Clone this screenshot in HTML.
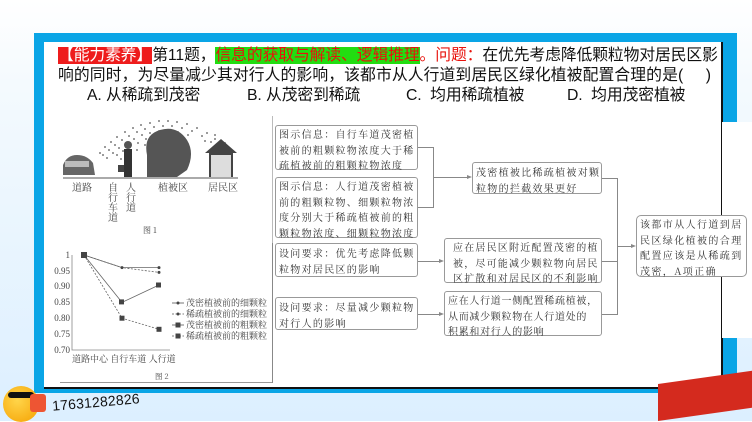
<!DOCTYPE html>
<html><head><meta charset="utf-8"><style>
*{margin:0;padding:0;box-sizing:border-box}
body{width:752px;height:421px;overflow:hidden;position:relative;background:linear-gradient(180deg,#fff 0%,#f4fafe 20%,#dcefff 100%);font-family:"Liberation Sans","Noto Sans CJK SC",sans-serif}
.abs{position:absolute}
.frame{left:34px;top:33px;width:703px;height:360px;background:#0aa5e6}
.inner{left:44px;top:42px;width:679px;height:347px;background:#fff;border-bottom:2px solid #111;border-right:2px solid #111}
.q{left:58px;font-size:15.8px;line-height:20px;color:#111;letter-spacing:-0.1px;white-space:nowrap}
.red{background:#ee1c1c;color:#fff}
.grn{background:#22dd11;color:#e8120c}
.rt{color:#e8120c}
.box{position:absolute;border:1px solid #999;border-radius:3px;background:#fff;font-family:"Noto Serif CJK SC","Liberation Serif",serif;font-size:10px;line-height:15.5px;letter-spacing:1.3px;color:#333;padding:0 3px;white-space:nowrap}
.ln{position:absolute;background:#888}
.ar{position:absolute;width:0;height:0;border-left:5px solid #888;border-top:2.5px solid transparent;border-bottom:2.5px solid transparent}
</style></head><body>
<div class="abs frame"></div>
<div class="abs inner"></div>
<div class="abs q" style="top:46px"><span class="red">【能力素养】</span>第11题，<span class="grn">信息的获取与解读、逻辑推理</span><span class="rt">。问题：</span>在优先考虑降低颗粒物对居民区影</div>
<div class="abs q" style="top:66px;letter-spacing:0.1px">响的同时，为尽量减少其对行人的影响，该都市从人行道到居民区绿化植被配置合理的是(&nbsp;&nbsp;&nbsp;&nbsp;&nbsp;)</div>
<div class="abs q" style="top:86px;left:87px">A. 从稀疏到茂密</div>
<div class="abs q" style="top:86px;left:247px">B. 从茂密到稀疏</div>
<div class="abs q" style="top:86px;left:406px">C.&nbsp; 均用稀疏植被</div>
<div class="abs q" style="top:86px;left:567px">D.&nbsp; 均用茂密植被</div>

<div class="abs" style="left:60px;top:116px;width:213px;height:267px;border-right:1px solid #bbb;border-bottom:1px solid #999"></div>
<svg class="abs" style="left:55px;top:115px" width="220" height="125" viewBox="0 0 220 125">
<g fill="#555">
<circle cx="45" cy="38" r="0.9"/><circle cx="50" cy="32" r="0.9"/><circle cx="56" cy="27" r="0.9"/><circle cx="62" cy="22" r="0.9"/><circle cx="70" cy="17" r="0.9"/><circle cx="78" cy="13" r="0.9"/><circle cx="86" cy="10" r="0.9"/><circle cx="95" cy="8" r="0.9"/><circle cx="104" cy="6" r="0.9"/><circle cx="113" cy="6" r="0.9"/><circle cx="122" cy="7" r="0.9"/><circle cx="132" cy="9" r="0.9"/><circle cx="142" cy="13" r="0.9"/><circle cx="152" cy="18" r="0.9"/><circle cx="160" cy="24" r="0.9"/>
<circle cx="48" cy="40" r="0.9"/><circle cx="54" cy="35" r="0.9"/><circle cx="60" cy="30" r="0.9"/><circle cx="67" cy="25" r="0.9"/><circle cx="74" cy="21" r="0.9"/><circle cx="82" cy="17" r="0.9"/><circle cx="90" cy="14" r="0.9"/><circle cx="99" cy="12" r="0.9"/><circle cx="108" cy="11" r="0.9"/><circle cx="117" cy="11" r="0.9"/><circle cx="127" cy="13" r="0.9"/><circle cx="137" cy="16" r="0.9"/><circle cx="147" cy="21" r="0.9"/><circle cx="156" cy="27" r="0.9"/><circle cx="165" cy="30" r="0.9"/>
<circle cx="52" cy="43" r="0.9"/><circle cx="58" cy="38" r="0.9"/><circle cx="64" cy="33" r="0.9"/><circle cx="71" cy="29" r="0.9"/><circle cx="79" cy="24" r="0.9"/><circle cx="87" cy="20" r="0.9"/><circle cx="95" cy="18" r="0.9"/><circle cx="104" cy="16" r="0.9"/><circle cx="113" cy="15" r="0.9"/><circle cx="123" cy="17" r="0.9"/><circle cx="133" cy="20" r="0.9"/><circle cx="150" cy="26" r="0.9"/><circle cx="170" cy="28" r="0.9"/>
<circle cx="62" cy="40" r="0.9"/><circle cx="68" cy="36" r="0.9"/><circle cx="75" cy="32" r="0.9"/><circle cx="83" cy="28" r="0.9"/><circle cx="91" cy="24" r="0.9"/><circle cx="100" cy="22" r="0.9"/><circle cx="109" cy="20" r="0.9"/><circle cx="118" cy="20" r="0.9"/><circle cx="128" cy="23" r="0.9"/><circle cx="160" cy="20" r="0.9"/><circle cx="66" cy="44" r="0.9"/><circle cx="74" cy="40" r="0.9"/><circle cx="82" cy="35" r="0.9"/><circle cx="90" cy="30" r="0.9"/><circle cx="96" cy="30" r="0.9"/>
</g>
<path d="M8 50 Q12 40 22 40 Q32 40 38 48 L40 60 L8 60 Z" fill="#666"/>
<rect x="10" y="46" width="24" height="6" fill="#bbb"/>
<rect x="69" y="34" width="8" height="28" fill="#333"/><circle cx="73" cy="30" r="4" fill="#555"/><rect x="63" y="50" width="6" height="7" fill="#444"/>
<path d="M92 62 L92 40 Q88 20 105 15 Q122 10 132 25 Q140 38 132 55 L122 62 Z" fill="#555"/>
<path d="M150 38 L166 24 L182 38 L178 38 L178 62 L154 62 L154 38 Z" fill="#444"/><rect x="156" y="40" width="20" height="22" fill="#ddd"/>
<line x1="8" y1="63" x2="183" y2="63" stroke="#555" stroke-width="1"/>
<g font-size="10" fill="#444" font-family="Noto Serif CJK SC,serif">
<text x="17" y="76">道路</text><text x="103" y="76">植被区</text><text x="153" y="76">居民区</text>
<text x="53" y="76">自</text><text x="53" y="86">行</text><text x="53" y="96">车</text><text x="53" y="106">道</text>
<text x="71" y="76">人</text><text x="71" y="86">行</text><text x="71" y="96">道</text>
<text x="88" y="118" font-size="8">图 1</text></g>
</svg>

<svg class="abs" style="left:50px;top:245px" width="225" height="140" viewBox="0 0 225 140">
<g font-family="Liberation Serif,serif" font-size="9" fill="#444" text-anchor="end">
<text x="20" y="13">1</text><text x="20" y="29">0.95</text><text x="20" y="44">0.90</text><text x="20" y="60">0.85</text><text x="20" y="76">0.80</text><text x="20" y="92">0.75</text><text x="20" y="108">0.70</text></g>
<path d="M22 10V105H120" fill="none" stroke="#888" stroke-width="0.8"/>
<g stroke="#666" stroke-width="0.8" fill="none">
<polyline points="34,10 72,22.6 109,22.6"/>
<polyline points="34,10 72,22.6 109,27.4" stroke-dasharray="2,1.5"/>
<polyline points="34,10 72,57.4 109,40"/>
<polyline points="34,10 72,73.2 109,84.3" stroke-dasharray="2,1.5"/>
</g>
<g fill="#444"><circle cx="72" cy="22.6" r="1.5"/><circle cx="109" cy="22.6" r="1.5"/><circle cx="109" cy="27.4" r="1.5"/>
<rect x="31" y="7" width="6" height="6"/><rect x="69" y="54.4" width="5" height="5"/><rect x="106" y="37.5" width="5" height="5"/><rect x="69.5" y="70.7" width="5" height="5"/><rect x="106.5" y="81.8" width="5" height="5"/></g>
<g font-family="Noto Serif CJK SC,serif" font-size="9" fill="#444">
<text x="22" y="117">道路中心 自行车道 人行道</text><text x="105" y="134" font-size="7.5">图 2</text>
<text x="136" y="61">茂密植被前的细颗粒</text><text x="136" y="72">稀疏植被前的细颗粒</text><text x="136" y="83">茂密植被前的粗颗粒</text><text x="136" y="94">稀疏植被前的粗颗粒</text></g>
<g stroke="#555" stroke-width="0.8"><line x1="122" y1="58" x2="134" y2="58"/><line x1="122" y1="69" x2="134" y2="69" stroke-dasharray="2,1.5"/><line x1="122" y1="80" x2="134" y2="80"/><line x1="122" y1="91" x2="134" y2="91" stroke-dasharray="2,1.5"/></g>
<g fill="#444"><circle cx="128" cy="58" r="1.5"/><circle cx="128" cy="69" r="1.5"/><rect x="125.5" y="77.5" width="5" height="5"/><rect x="125.5" y="88.5" width="5" height="5"/></g>
</svg>

<div class="abs" style="left:722px;top:122px;width:30px;height:216px;background:#fff"></div>
<div class="ln" style="left:272px;top:243px;width:1px;height:140px"></div>
<div class="box" style="left:275px;top:125px;width:143px;height:45px">图示信息：自行车道茂密植<br>被前的粗颗粒物浓度大于稀<br>疏植被前的粗颗粒物浓度</div>
<div class="box" style="left:275px;top:177px;width:143px;height:61px">图示信息：人行道茂密植被<br>前的粗颗粒物、细颗粒物浓<br>度分别大于稀疏植被前的粗<br>颗粒物浓度、细颗粒物浓度</div>
<div class="box" style="left:275px;top:243px;width:143px;height:34px;padding-top:1px">设问要求：优先考虑降低颗<br>粒物对居民区的影响</div>
<div class="box" style="left:275px;top:297px;width:143px;height:33px;padding-top:1px">设问要求：尽量减少颗粒物<br>对行人的影响</div>
<div class="box" style="left:472px;top:162px;width:130px;height:32px;padding-top:1px">茂密植被比稀疏植被对颗<br>粒物的拦截效果更好</div>
<div class="box" style="left:444px;top:238px;width:158px;height:45px;padding-left:8px;letter-spacing:1.2px">应在居民区附近配置茂密的植<br>被，尽可能减少颗粒物向居民<br>区扩散和对居民区的不利影响</div>
<div class="box" style="left:444px;top:291px;width:158px;height:45px;letter-spacing:0.7px">应在人行道一侧配置稀疏植被，<br>从而减少颗粒物在人行道处的<br>积累和对行人的影响</div>
<div class="box" style="left:636px;top:215px;width:111px;height:62px;border-radius:5px;letter-spacing:1.4px">该都市从人行道到居<br>民区绿化植被的合理<br>配置应该是从稀疏到<br>茂密，A项正确</div>
<div class="ln" style="left:418px;top:147px;width:15px;height:1px"></div>
<div class="ln" style="left:418px;top:207px;width:15px;height:1px"></div>
<div class="ln" style="left:433px;top:147px;width:1px;height:61px"></div>
<div class="ln" style="left:433px;top:177px;width:34px;height:1px"></div><div class="ar" style="left:467px;top:175px"></div>
<div class="ln" style="left:418px;top:261px;width:21px;height:1px"></div><div class="ar" style="left:439px;top:259px"></div>
<div class="ln" style="left:418px;top:314px;width:21px;height:1px"></div><div class="ar" style="left:439px;top:312px"></div>
<div class="ln" style="left:602px;top:178px;width:15px;height:1px"></div>
<div class="ln" style="left:602px;top:261px;width:15px;height:1px"></div>
<div class="ln" style="left:602px;top:314px;width:15px;height:1px"></div>
<div class="ln" style="left:617px;top:178px;width:1px;height:137px"></div>
<div class="ln" style="left:617px;top:246px;width:14px;height:1px"></div><div class="ar" style="left:631px;top:244px"></div>

<div class="abs" style="left:3px;top:386px;width:36px;height:36px;border-radius:50%;background:radial-gradient(circle at 40% 40%,#ffd54a,#f5a000)"></div>
<div class="abs" style="left:8px;top:392px;width:26px;height:6px;background:#111;border-radius:3px"></div>
<div class="abs" style="left:30px;top:394px;width:16px;height:18px;background:#e53;border-radius:3px"></div>
<div class="abs" style="left:52px;top:394px;font-size:14px;color:#111;transform:rotate(-5deg);letter-spacing:0.2px">17631282826</div>
<div class="abs" style="left:658px;top:384px;width:94px;height:37px;background:#d42a1e;transform:skewY(-8deg);transform-origin:left bottom"></div>
</body></html>
